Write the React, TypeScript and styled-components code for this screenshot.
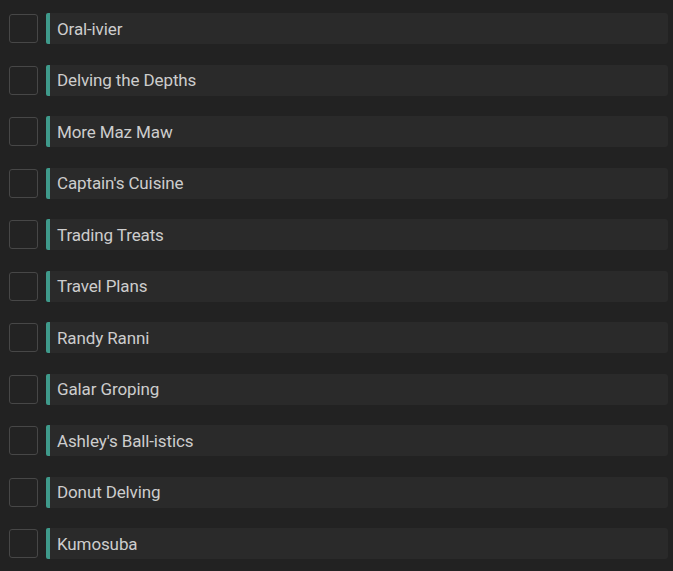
import React from "react"
import styled, { createGlobalStyle } from "styled-components"

const GlobalStyle = createGlobalStyle`
  html, body {
    margin: 0;
    padding: 0;
    background-color: #222222;
  }

  body {
    font-family: Roboto, "Noto Sans", sans-serif;
  }
`

const ListRoot = styled.div`
  display: flex;
  flex-direction: column;
  gap: 20.5px;
  padding: 13px 5px 10px 9px;
  width: 673px;
  height: 571px;
  box-sizing: border-box;
  overflow: hidden;
`

const Row = styled.div`
  display: flex;
  align-items: center;
  gap: 8px;
  height: 31px;
`

const CheckBox = styled.div`
  flex: 0 0 auto;
  width: 29px;
  height: 29px;
  box-sizing: border-box;
  border: 1px solid #474747;
  border-radius: 3px;
  background-color: #232323;
`

const TitleBox = styled.div`
  flex: 1;
  height: 31px;
  display: flex;
  align-items: center;
  box-sizing: border-box;
  padding-left: 7px;
  background-color: #2a2a2a;
  border-left: 4px solid #3f9a8b;
  border-radius: 2px 3px 3px 2px;
  color: #cdcdcd;
  font-size: 17px;
  letter-spacing: -0.12px;
`

const titles = [
  "Oral-ivier",
  "Delving the Depths",
  "More Maz Maw",
  "Captain's Cuisine",
  "Trading Treats",
  "Travel Plans",
  "Randy Ranni",
  "Galar Groping",
  "Ashley's Ball-istics",
  "Donut Delving",
  "Kumosuba",
]

const App: React.FC = () => {
  return (
    <>
      <GlobalStyle />
      <ListRoot>
        {titles.map(title => (
          <Row key={title}>
            <CheckBox />
            <TitleBox>{title}</TitleBox>
          </Row>
        ))}
      </ListRoot>
    </>
  )
}

export default App
